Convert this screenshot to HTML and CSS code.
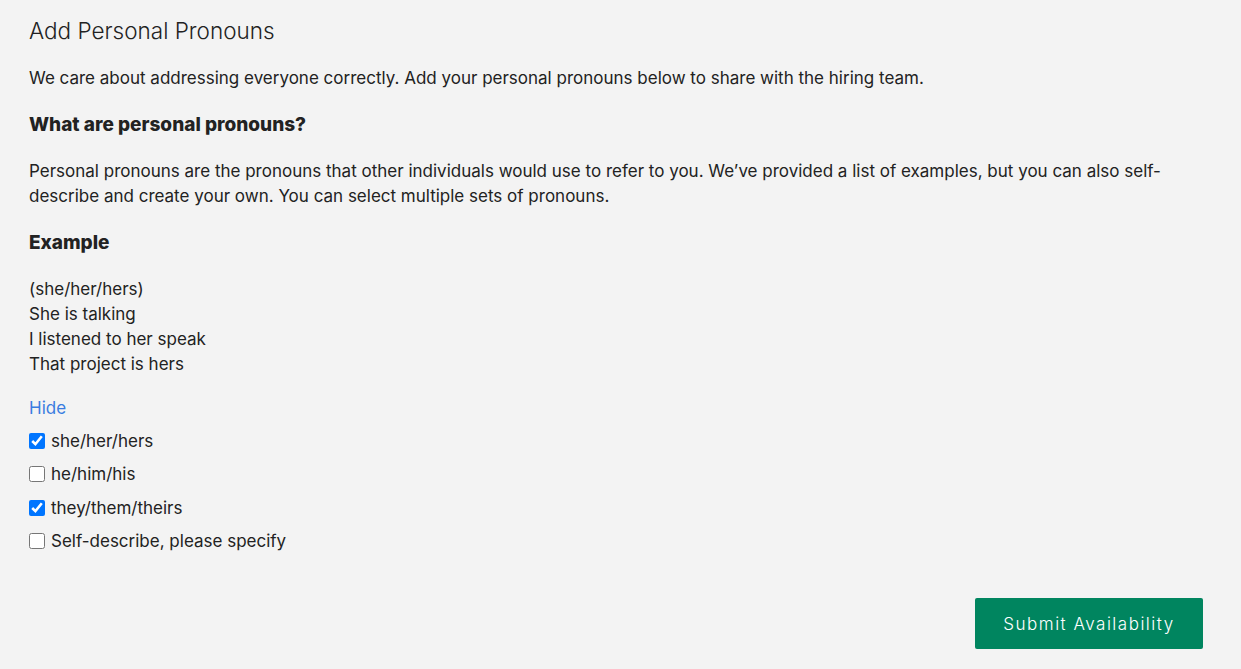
FILE: index.html
```html
<!DOCTYPE html>
<html lang="en">
<head>
  <meta charset="UTF-8">
  <meta name="viewport" content="width=device-width, initial-scale=1.0">
  <title>Add Personal Pronouns</title>
  <link rel="stylesheet" href="styles.css">
</head>
<body>
  <div class="pronouns">
    <h2 class="title">Add Personal Pronouns</h2>
    <p class="intro">We care about addressing everyone correctly. Add your personal pronouns below to share with the hiring team.</p>

    <h3 class="subhead">What are personal pronouns?</h3>
    <p class="text">Personal pronouns are the pronouns that other individuals would use to refer to you. We’ve provided a list of examples, but you can also self-describe and create your own. You can select multiple sets of pronouns.</p>

    <h3 class="subhead">Example</h3>
    <div class="example">
      <div>(she/her/hers)</div>
      <div>She is talking</div>
      <div>I listened to her speak</div>
      <div>That project is hers</div>
    </div>

    <a class="toggle" href="#">Hide</a>

    <div class="options">
      <label class="option"><input type="checkbox" checked> she/her/hers</label>
      <label class="option"><input type="checkbox"> he/him/his</label>
      <label class="option"><input type="checkbox" checked> they/them/theirs</label>
      <label class="option"><input type="checkbox"> Self-describe, please specify</label>
    </div>
  </div>

  <div class="actions">
    <button class="submit">Submit Availability</button>
  </div>
</body>
</html>
```

FILE: styles.css
```css
body {
  font-family: Inter, "Noto Sans", sans-serif;
  color: #222;
  background: #f3f3f3;
  margin: 0;
  padding: 16px 38px 20px 29px;
}
.title {
  font-size: 22.5px;
  font-weight: 300;
  margin: 0 0 20px;
  line-height: 30px;
}
.intro,
.text {
  font-size: 17px;
  line-height: 25px;
  margin: 0 0 21px;
}
.subhead {
  font-size: 19px;
  font-weight: 800;
  line-height: 26px;
  margin: 0 0 21px;
}
.example {
  font-size: 17px;
  line-height: 25px;
  margin-bottom: 20px;
}
.toggle {
  display: block;
  color: #3a7ce0;
  text-decoration: none;
  font-size: 17px;
  line-height: 24px;
  margin-bottom: 9px;
  margin-top: -1px;
}
.options {
  display: flex;
  flex-direction: column;
  gap: 9.4px;
}
.option {
  display: flex;
  align-items: center;
  gap: 6px;
  font-size: 17px;
  line-height: 24px;
}
.option input {
  width: 16px;
  height: 16px;
  margin: 0;
}
.actions {
  display: flex;
  justify-content: flex-end;
  margin-top: 45px;
}
.submit {
  width: 228px;
  height: 51px;
  background: #00855f;
  color: #fff;
  border: none;
  border-radius: 2px;
  font-family: inherit;
  font-size: 17px;
  font-weight: 300;
  letter-spacing: 1.5px;
  cursor: pointer;
}
```
